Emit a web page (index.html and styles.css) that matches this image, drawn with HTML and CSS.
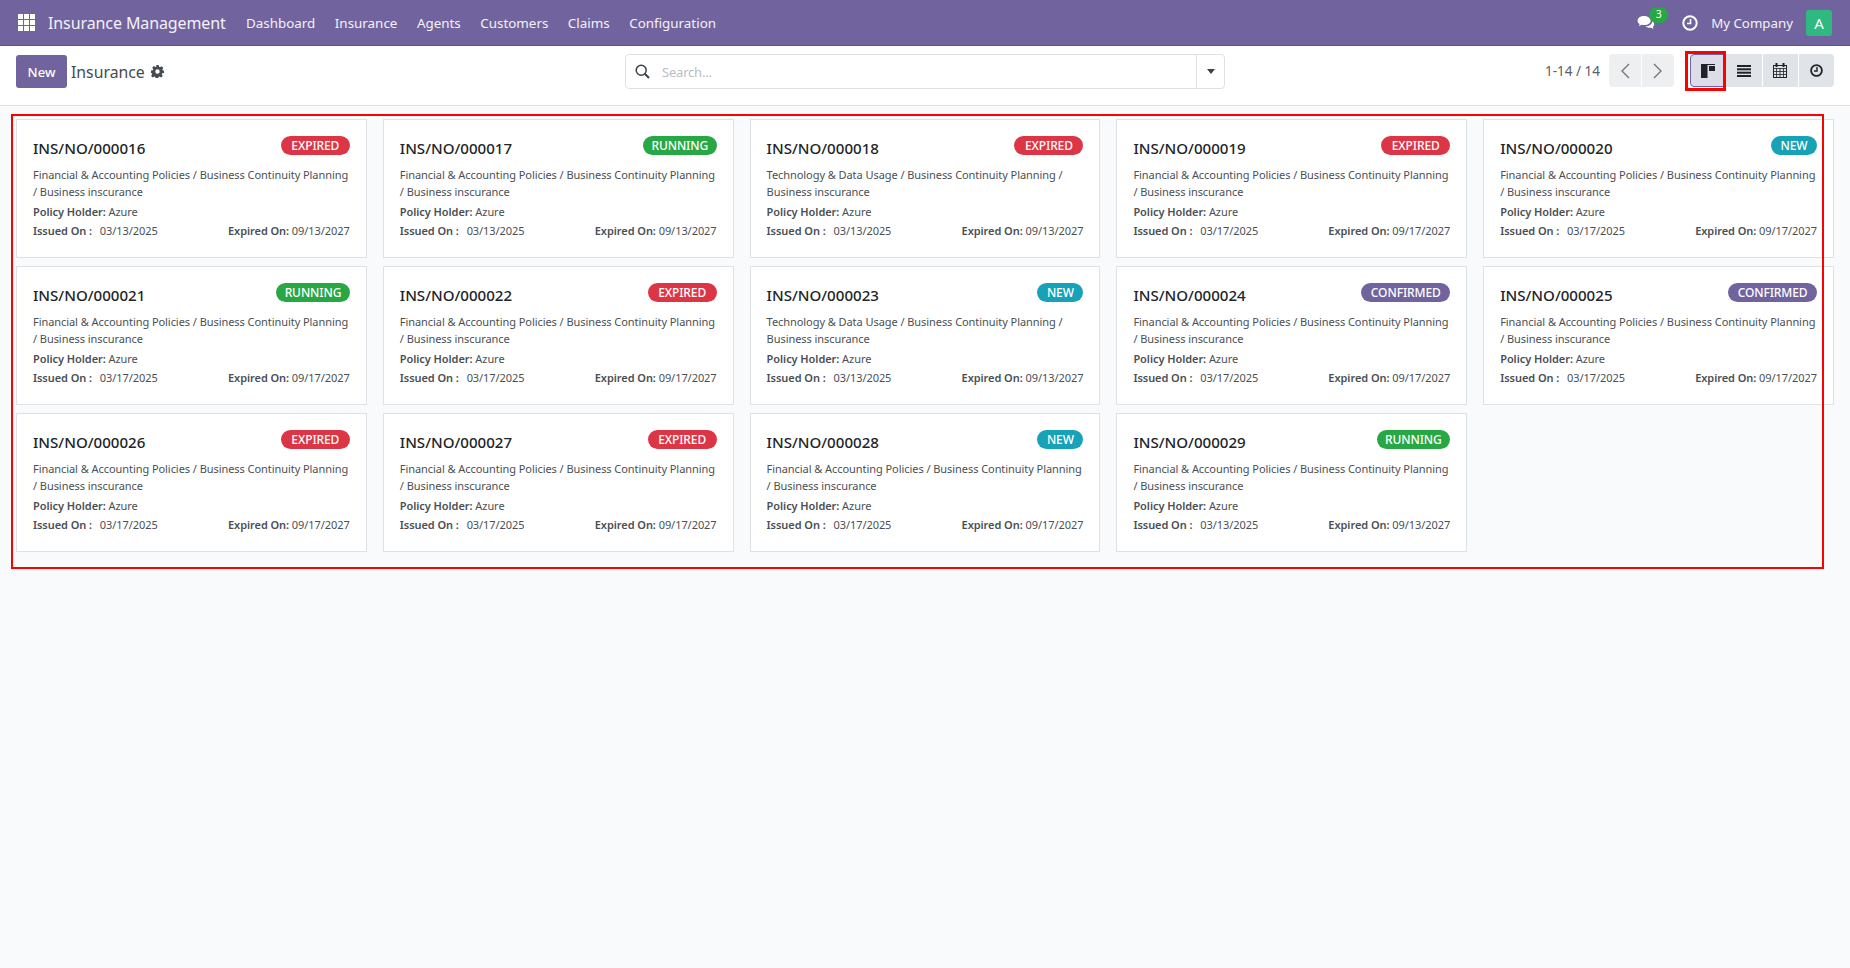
FILE: index.html
```html
<!DOCTYPE html>
<html lang="en">
<head>
    <meta charset="UTF-8">
    <title>Insurance Management</title>
    <link rel="stylesheet" href="styles.css">
</head>
<body>
    <header class="navbar">
        <svg class="apps-icon" width="17" height="17" viewBox="0 0 17 17" fill="#fff">
            <rect x="0" y="0" width="5" height="5"/><rect x="6" y="0" width="5" height="5"/><rect x="12" y="0" width="5" height="5"/>
            <rect x="0" y="6" width="5" height="5"/><rect x="6" y="6" width="5" height="5"/><rect x="12" y="6" width="5" height="5"/>
            <rect x="0" y="12" width="5" height="5"/><rect x="6" y="12" width="5" height="5"/><rect x="12" y="12" width="5" height="5"/>
        </svg>
        <span class="brand">Insurance Management</span>
        <nav class="menu">
            <a>Dashboard</a>
            <a>Insurance</a>
            <a>Agents</a>
            <a>Customers</a>
            <a>Claims</a>
            <a>Configuration</a>
        </nav>
        <div class="systray">
            <span class="chat">
                <svg width="18" height="15" viewBox="0 0 19 16" fill="#fff">
                    <path d="M7.5 1C3.6 1 .5 3.2.5 6c0 1.500.9 2.800 2.300 3.700L1.800 12l3-1.600c.8.2 1.700.3 2.700.3 3.900 0 7-2.100 7-4.700S11.400 1 7.500 1z"/>
                    <path d="M16.200 5.500c.1.300.1.600.1.900 0 3.200-3.300 5.600-7.300 5.700 1 1 2.600 1.600 4.300 1.600.5 0 1-.1 1.500-.2l2.700 1.500-.8-2.200c1-.8 1.500-1.800 1.500-2.900 0-1.700-.7-3.300-2-4.400z"/>
                </svg>
                <span class="chat-count">3</span>
            </span>
            <svg class="clock" width="16" height="16" viewBox="0 0 16 16" fill="none" stroke="#fff">
                <circle cx="8" cy="8" r="6.700" stroke-width="2"/>
                <path d="M8.500 4v4.500H5" stroke-width="1.600"/>
            </svg>
            <span class="company">My Company</span>
            <span class="avatar">A</span>
        </div>
    </header>

    <section class="control-panel">
        <div class="cp-left">
            <button class="btn-new">New</button>
            <span class="cp-title">Insurance</span>
            <svg width="13" height="13" viewBox="0 0 16 16" fill="#444b53" fill-rule="evenodd">
                <path d="M6.500 0h3l.4 2.200 1.300.6L13.100 1.500l2.100 2.100-1.300 1.900.6 1.300L16 6.900v2.900l-2.200.4-.6 1.300 1.300 1.900-2.100 2.100-1.900-1.300-1.300.6-.4 2.200h-3l-.4-2.200-1.300-.6-1.900 1.300-2.100-2.100 1.300-1.900-.6-1.300L0 9.800V6.900l2.200-.4.600-1.300-1.300-1.900 2.100-2.100 1.900 1.300 1.300-.6zM8 5.300a2.700 2.700 0 1 0 0 5.400 2.700 2.700 0 0 0 0-5.400z"/>
            </svg>
        </div>
        <div class="search">
            <svg class="search-icon" width="15" height="15" viewBox="0 0 15 15" fill="none" stroke="#3c4249" stroke-width="1.500">
                <circle cx="6.200" cy="6.200" r="5"/>
                <path d="M9.800 9.800L14 14" stroke-width="2"/>
            </svg>
            <span class="search-hint">Search...</span>
            <span class="search-drop"><i class="caret"></i></span>
        </div>
        <div class="cp-right">
            <span class="pager-text">1-14 / 14</span>
            <div class="btn-group pager">
                <button>
                    <svg width="10" height="16" viewBox="0 0 10 16" fill="none" stroke="#6d737a" stroke-width="1.300"><path d="M9 1L2 8l7 7"/></svg>
                </button>
                <button>
                    <svg width="10" height="16" viewBox="0 0 10 16" fill="none" stroke="#6d737a" stroke-width="1.300"><path d="M1 1l7 7-7 7"/></svg>
                </button>
            </div>
            <div class="btn-group views">
                <button class="active">
                    <svg width="14" height="14" viewBox="0 0 14 14" fill="#1f2329"><rect x="0" y="0" width="14" height="1"/><rect x="0" y="0" width="6.500" height="14"/><rect x="8" y="2" width="6" height="5"/></svg>
                </button>
                <button>
                    <svg width="14" height="12" viewBox="0 0 14 12" fill="#1f2329"><rect y="0" width="14" height="2"/><rect y="3.300" width="14" height="2"/><rect y="6.700" width="14" height="2"/><rect y="10" width="14" height="2"/></svg>
                </button>
                <button>
                    <svg width="14" height="15" viewBox="0 0 14 15" fill="none" stroke="#1f2329"><rect x=".5" y="2.500" width="13" height="12"/><path d="M0 5.500h14M0 8.500h14M0 11.500h14M3.500 5v10M7 5v10M10.500 5v10" stroke-width=".8"/><path d="M3.500 0v4M10.500 0v4" stroke-width="2"/></svg>
                </button>
                <button>
                    <svg width="13" height="13" viewBox="0 0 13 13" fill="none" stroke="#1f2329"><circle cx="6.500" cy="6.500" r="5.400" stroke-width="1.800"/><path d="M7 3v4H4" stroke-width="1.400"/></svg>
                </button>
            </div>
        </div>
    </section>

    <main class="kanban" id="kanban"></main>

    <div class="mark mark-cards"></div>
    <div class="mark mark-view"></div>

    <script src="app.js"></script>
</body>
</html>
```

FILE: styles.css
```css
* {
    box-sizing: border-box;
}
html, body {
    height: 100%;
}
body {
    margin: 0;
    font-family: "Noto Sans", sans-serif;
    font-size: 12px;
    background: #f9fafb;
    color: #4a4f55;
    overflow: hidden;
}
button {
    font-family: inherit;
    border: none;
    padding: 0;
}

/* top bar */
.navbar {
    display: flex;
    align-items: center;
    height: 46px;
    padding-left: 18px;
    background: #71639e;
    border-bottom: 1px solid #5f5488;
    color: #fff;
}
.brand {
    margin-left: 13px;
    font-size: 16px;
    letter-spacing: -.1px;
    width: 198px;
    white-space: nowrap;
    color: #f4f2f8;
}
.menu {
    display: flex;
    gap: 19.500px;
    font-size: 13.400px;
    color: #f4f2f8;
}
.systray {
    display: flex;
    align-items: center;
    margin-left: auto;
    padding-right: 18px;
}
.chat {
    position: relative;
    display: flex;
    margin-right: 27px;
}
.chat-count {
    position: absolute;
    top: -8px;
    left: 12px;
    width: 19px;
    height: 16px;
    border-radius: 8px;
    background: #28a745;
    font-size: 10.500px;
    line-height: 15px;
    text-align: center;
}
.company {
    margin-left: 13px;
    font-size: 13.300px;
    color: #f4f2f8;
}
.avatar {
    width: 26px;
    height: 26px;
    margin-left: 13px;
    border-radius: 3px;
    background: #2fb880;
    font-size: 15px;
    line-height: 26px;
    text-align: center;
}

/* control panel */
.control-panel {
    position: relative;
    display: flex;
    align-items: flex-start;
    justify-content: space-between;
    height: 60px;
    padding: 8px 16px 0;
    background: #fff;
    border-bottom: 1px solid #dee2e6;
}
.cp-left {
    display: flex;
    align-items: center;
    margin-top: 1px;
}
.btn-new {
    width: 51px;
    height: 33px;
    border-radius: 3px;
    background: #71639e;
    color: #fff;
    font-size: 13px;
    font-weight: 500;
}
.cp-title {
    margin: 0 6px 0 4px;
    font-size: 15.800px;
    color: #454b52;
}
.search {
    position: absolute;
    top: 8px;
    left: 625px;
    display: flex;
    align-items: center;
    width: 600px;
    height: 35px;
    border: 1px solid #dee2e6;
    border-radius: 4px;
}
.search-icon {
    margin-left: 9px;
}
.search-hint {
    margin-left: 12px;
    font-size: 13px;
    color: #b9bec5;
    letter-spacing: -.2px;
}
.search-drop {
    display: flex;
    align-items: center;
    justify-content: center;
    width: 28px;
    height: 100%;
    margin-left: auto;
    border-left: 1px solid #dee2e6;
}
.caret {
    border-top: 5px solid #3c4249;
    border-left: 4.500px solid transparent;
    border-right: 4.500px solid transparent;
}
.cp-right {
    display: flex;
    align-items: center;
}
.pager-text {
    margin-right: 9px;
    font-size: 13.500px;
    color: #5a6067;
}
.btn-group {
    display: flex;
    gap: 1px;
    height: 33px;
}
.btn-group button {
    display: flex;
    align-items: center;
    justify-content: center;
    height: 33px;
    background: #e0e3e7;
}
.btn-group button:first-child {
    border-radius: 4px 0 0 4px;
}
.btn-group button:last-child {
    border-radius: 0 4px 4px 0;
}
.pager button {
    width: 32px;
    background: #eeeff1;
}
.views {
    margin-left: 16px;
}
.views button {
    width: 35.250px;
}
.views .active {
    background: #dedce8;
    border: 1px solid #71639e;
}

/* cards */
.kanban {
    display: grid;
    grid-template-columns: repeat(5, 1fr);
    grid-auto-rows: 139px;
    gap: 8px 16px;
    padding: 13px 16px 0;
}
.card {
    padding: 16px 16px 0;
    background: #fff;
    border: 1px solid #dee2e6;
    overflow: hidden;
}
.card-head {
    display: flex;
    align-items: flex-start;
    justify-content: space-between;
    height: 30px;
}
.card-name {
    margin-top: 2px;
    font-size: 15.100px;
    font-weight: 500;
    line-height: 20px;
    color: #212529;
}
.badge {
    height: 19px;
    padding: 0 10px;
    border-radius: 10px;
    color: #fff;
    font-size: 12px;
    font-weight: 500;
    line-height: 19px;
    letter-spacing: -.1px;
}
.badge-expired { background: #dc3545; padding: 0 10.500px; }
.badge-running { background: #28a745; padding: 0 8.500px; }
.badge-new { background: #17a2b8; padding: 0 9.500px; }
.badge-confirmed { background: #71639e; padding: 0 9.500px; }
.card-desc {
    font-size: 11px;
    line-height: 17px;
    letter-spacing: -.06px;
}
.card-line {
    margin-top: 3px;
    font-size: 11px;
    line-height: 17px;
    letter-spacing: -.06px;
}
.card-dates {
    display: flex;
    justify-content: space-between;
    margin-top: 2px;
    font-size: 11px;
    line-height: 17px;
    letter-spacing: -.06px;
}
.card b {
    font-weight: 600;
}
.issued b {
    margin-right: 5px;
}

/* red annotation boxes drawn on the screenshot */
.mark {
    position: absolute;
    border: 2px solid #f00;
    pointer-events: none;
}
.mark-cards {
    left: 11px;
    top: 114px;
    width: 1813px;
    height: 455px;
}
.mark-view {
    left: 1685px;
    top: 51px;
    width: 41px;
    height: 40px;
    border-width: 3px;
}
```

FILE: app.js
```js
var topic = "Financial & Accounting Policies / Business Continuity Planning / Business inscurance";
var tech = "Technology & Data Usage / Business Continuity Planning / Business inscurance";

var cards = [
    ["000016", "Expired", topic, "03/13/2025", "09/13/2027"],
    ["000017", "Running", topic, "03/13/2025", "09/13/2027"],
    ["000018", "Expired", tech, "03/13/2025", "09/13/2027"],
    ["000019", "Expired", topic, "03/17/2025", "09/17/2027"],
    ["000020", "New", topic, "03/17/2025", "09/17/2027"],
    ["000021", "Running", topic, "03/17/2025", "09/17/2027"],
    ["000022", "Expired", topic, "03/17/2025", "09/17/2027"],
    ["000023", "New", tech, "03/13/2025", "09/13/2027"],
    ["000024", "Confirmed", topic, "03/17/2025", "09/17/2027"],
    ["000025", "Confirmed", topic, "03/17/2025", "09/17/2027"],
    ["000026", "Expired", topic, "03/17/2025", "09/17/2027"],
    ["000027", "Expired", topic, "03/17/2025", "09/17/2027"],
    ["000028", "New", topic, "03/17/2025", "09/17/2027"],
    ["000029", "Running", topic, "03/13/2025", "09/13/2027"]
];

var html = "";
for (var i = 0; i < cards.length; i++) {
    var c = cards[i];
    html += '<article class="card">' +
        '<div class="card-head">' +
        '<span class="card-name">INS/NO/' + c[0] + '</span>' +
        '<span class="badge badge-' + c[1].toLowerCase() + '">' + c[1].toUpperCase() + '</span>' +
        '</div>' +
        '<div class="card-desc">' + c[2].replace(/&/g, "&amp;") + '</div>' +
        '<div class="card-line"><b>Policy Holder:</b> Azure</div>' +
        '<div class="card-dates">' +
        '<span class="issued"><b>Issued On :</b> ' + c[3] + '</span>' +
        '<span><b>Expired On:</b> ' + c[4] + '</span>' +
        '</div>' +
        '</article>';
}
document.getElementById("kanban").innerHTML = html;
```
